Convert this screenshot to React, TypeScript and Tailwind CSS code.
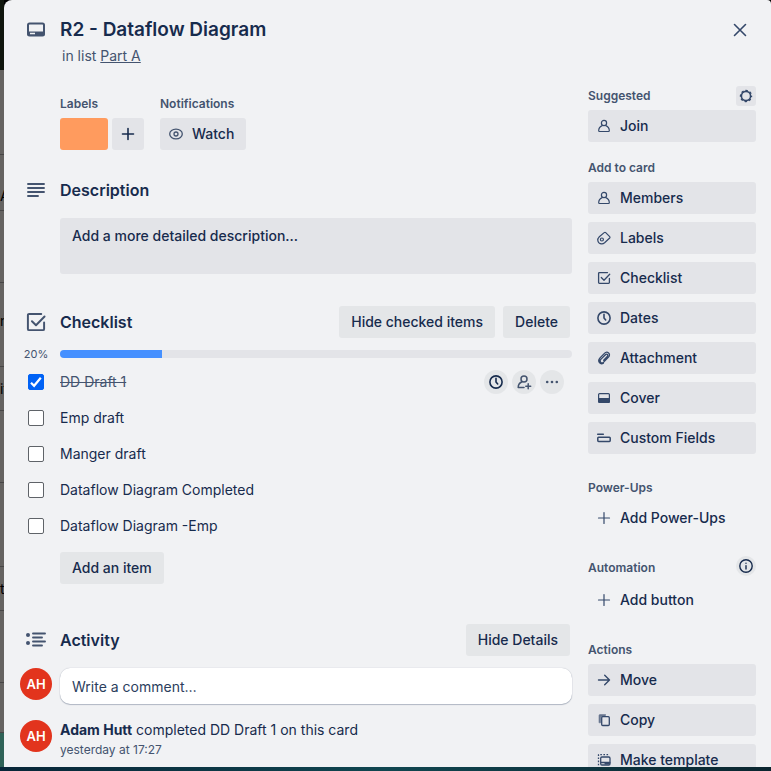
import React, { useState } from "react";

type IconProps = { className?: string; children: React.ReactNode; w?: number };

function Icon({ className = "size-4", children, w = 1.3 }: IconProps) {
  return (
    <svg
      viewBox="0 0 16 16"
      className={`shrink-0 ${className}`}
      fill="none"
      stroke="currentColor"
      strokeWidth={w}
      strokeLinecap="round"
      strokeLinejoin="round"
      aria-hidden="true"
    >
      {children}
    </svg>
  );
}

const Person = () => (
  <Icon w={1.2}>
    <circle cx="8" cy="5" r="2.6" />
    <path d="M6.2 7.6C4 8.6 2.7 10.4 2.7 12.7c0 .5.3.8.8.8h9c.5 0 .8-.3.8-.8 0-2.3-1.3-4.1-3.5-5.1" />
  </Icon>
);
const PersonAdd = () => (
  <Icon w={1.5}>
    <circle cx="8" cy="5" r="3" />
    <path d="M6 7.8C3.8 8.8 2.2 10.6 2.2 13.4H8M12.2 9.8v5M9.8 12.3h4.9" />
  </Icon>
);
const Tag = () => (
  <Icon w={1.2}>
    <path d="M8.2 2.6 3.3 6.700C.6 9.200 1.600 13.700 5.500 13.900c1.300.1 2.200-.3 3.100-1.100L13.700 8c.4-.4.4-.9 0-1.300L9.700 2.600c-.4-.4-1-.4-1.500 0Z" />
    <circle cx="5.900" cy="9.500" r="1.500" />
  </Icon>
);
const Check = ({ className, w }: { className?: string; w?: number }) => (
  <Icon className={className} w={w}>
    <path d="M11.500 2.600H3.400c-.5 0-.8.3-.8.8v9.200c0 .5.3.8.8.8h9.200c.5 0 .8-.3.8-.8V8.300" />
    <path d="m5.300 7.500 2.700 2.700 5.700-5.900" />
  </Icon>
);
const Clock = () => (
  <Icon w={1.6}>
    <circle cx="8" cy="8" r="6.100" />
    <path d="M8 4.300V8l1.700 2" />
  </Icon>
);
const Clip = () => (
  <Icon w={1.3}>
    <path d="m7.700 10.200 3.600-3.700c1.400-1.500-.5-3.200-1.900-1.800l-4.600 4.700c-2 2.200.8 4.900 2.900 2.700l4.800-5c2.900-3.200-1.300-6.700-4.100-3.700L4 7.900c-3.100 3.500.5 7.100 3.400 5.200" />
  </Icon>
);
const Cover = () => (
  <Icon w={1.2}>
    <rect x="2.600" y="3.600" width="10.800" height="8.800" rx="1" />
    <path d="M2.600 8.600h10.800v3c0 .5-.3.8-.8.8H3.400c-.5 0-.8-.3-.8-.8Z" fill="currentColor" />
  </Icon>
);
const Fields = () => (
  <Icon w={1.5}>
    <path d="M1.700 4.300h5.600" />
    <rect x="1.800" y="7.200" width="12.400" height="4.200" rx=".8" />
  </Icon>
);
const Plus = ({ w = 1.2 }: { w?: number }) => (
  <Icon w={w}>
    <path d="M8 2.500v11M2.500 8h11" />
  </Icon>
);
const Arrow = () => (
  <Icon w={1.4}>
    <path d="M2.500 8h11M8.700 3.300 13.500 8l-4.800 4.700" />
  </Icon>
);
const Copy = () => (
  <Icon>
    <path d="M9.500 2.600H4c-.6 0-1 .4-1 1v7.200h1.700V4.400h4.800Z" fill="currentColor" strokeWidth=".6" opacity=".7" />
    <rect x="5.700" y="4.700" width="7.600" height="8.800" rx="1" />
  </Icon>
);
const Template = () => (
  <Icon>
    <path d="M2.500 13.300V2.700h11" strokeDasharray="1.600 1.500" strokeLinecap="butt" />
    <rect x="4.700" y="5" width="9.300" height="8" rx="1.200" />
    <path d="M5 10.500h8.800M9 11.800h4.500" />
  </Icon>
);
const Gear = () => (
  <Icon w={1.6}>
    <circle cx="8" cy="8" r="4.600" />
    <circle cx="8" cy="8" r="5.500" strokeWidth="1.400" strokeLinecap="butt" strokeDasharray="2.400 1.920" strokeDashoffset="1.200" />
  </Icon>
);
const Info = () => (
  <Icon w={1.4}>
    <circle cx="8" cy="8" r="6.200" />
    <path d="M8 7.600v3.400M8 5.100v.1" />
  </Icon>
);
const Eye = () => (
  <Icon>
    <ellipse cx="8" cy="8" rx="6.300" ry="4.800" />
    <circle cx="8" cy="8" r="2" />
  </Icon>
);
const Dots = () => (
  <Icon w={0}>
    <g fill="currentColor">
      <circle cx="3.200" cy="8" r="1.300" />
      <circle cx="8" cy="8" r="1.300" />
      <circle cx="12.800" cy="8" r="1.300" />
    </g>
  </Icon>
);

const CardIcon = () => (
  <svg viewBox="0 0 24 24" className="size-6" fill="none" stroke="currentColor" strokeWidth="2" aria-hidden="true">
    <rect x="4" y="5.500" width="16" height="12" rx="1.500" />
    <path d="M4 14h16v2.500c0 .6-.4 1-1 1H5c-.6 0-1-.4-1-1Z" fill="currentColor" strokeWidth="1" />
    <path d="M6 15.500h5" stroke="#f1f2f4" strokeWidth="1.600" />
  </svg>
);
const Lines = () => (
  <svg viewBox="0 0 24 24" className="size-6" stroke="currentColor" strokeWidth="1.900" strokeLinecap="round" aria-hidden="true">
    <path d="M4 6h16M4 10h16M4 14h16M4 18h10" />
  </svg>
);
const ActivityIcon = () => (
  <svg viewBox="0 0 24 24" className="size-6" stroke="currentColor" strokeWidth="1.900" strokeLinecap="round" aria-hidden="true">
    <path d="M9 5.500h12M9 9.500h9M9 13.500h12M9 17.500h9" />
    <circle cx="4" cy="7" r="2" fill="currentColor" stroke="none" />
    <circle cx="4" cy="15" r="2" fill="currentColor" stroke="none" />
  </svg>
);

function SideButton({ icon, children, plain = false }: { icon: React.ReactNode; children: React.ReactNode; plain?: boolean }) {
  return (
    <button
      type="button"
      className={`flex h-8 w-full items-center gap-2 rounded-[3px] px-2 text-left font-medium ${plain ? "" : "bg-[#e3e4e8]"}`}
    >
      <span className="text-[#34486a]">{icon}</span>
      {children}
    </button>
  );
}

function GreyButton({ children }: { children: React.ReactNode }) {
  return (
    <button type="button" className="h-8 rounded-[3px] bg-[#e4e6e8] px-3 font-medium">
      {children}
    </button>
  );
}

function Row({ icon, children, className = "" }: { icon?: React.ReactNode; children: React.ReactNode; className?: string }) {
  return (
    <div className={`grid grid-cols-[56px_1fr] items-center ${className}`}>
      <div className="flex justify-center pl-2 text-[#44546f]">{icon}</div>
      {children}
    </div>
  );
}

const Avatar = () => (
  <span className="flex size-8 items-center justify-center rounded-full bg-[#e2341d] text-[13px] font-semibold text-white">AH</span>
);

const sideHeading = "text-xs font-semibold text-[#44546f]";

const boardCards: { size: string; text?: string }[] = [
  { size: "h-[85px] items-center" },
  { size: "h-[56px] items-end pb-1", text: "A" },
  { size: "h-[72px] items-center" },
  { size: "h-[84px] items-center pb-2", text: "m" },
  { size: "h-[44px] items-center", text: "it" },
  { size: "h-[72px] items-center" },
  { size: "h-[84px] items-center" },
  { size: "h-[44px] items-center", text: "ts" },
  { size: "h-[72px] items-center" },
  { size: "h-[50px] items-center" },
];

const initialItems = [
  { name: "DD Draft 1", done: true },
  { name: "Emp draft", done: false },
  { name: "Manger draft", done: false },
  { name: "Dataflow Diagram Completed", done: false },
  { name: "Dataflow Diagram -Emp", done: false },
];

export default function App() {
  const [items, setItems] = useState(initialItems);
  const percent = Math.round((items.filter((i) => i.done).length / items.length) * 100);
  const toggle = (n: number) => setItems(items.map((it, i) => (i === n ? { ...it, done: !it.done } : it)));

  return (
    <div className="flex h-screen overflow-hidden bg-linear-to-r from-[#082638] via-[#104650] to-[#0b2630] pb-1 font-['Inter','Liberation_Sans',sans-serif] text-sm leading-5 text-[#172b4d]">
      <div className="flex w-1 shrink-0 flex-col overflow-hidden bg-[#2f6257]" aria-hidden="true">
        <div className="h-[70px] shrink-0 bg-[#10160d]" />
        {boardCards.map((c, i) => (
          <div key={i} className={`flex shrink-0 border-b border-[#474646] bg-[#656361] text-black ${c.size}`}>
            {c.text}
          </div>
        ))}
      </div>

      <div className="min-w-0 flex-1 bg-black">
        <main className="h-full overflow-hidden rounded-tl-lg rounded-tr-[4px] bg-[#f1f2f4] pr-[15px]">
          <header className="flex items-start pt-4">
            <div className="min-w-0 flex-1">
              <Row icon={<CardIcon />}>
                <h1 className="text-[19px] leading-7 font-semibold">R2 - Dataflow Diagram</h1>
              </Row>
              <p className="mt-0.5 pl-[58px] text-[#44546f]">
                in list{" "}
                <a href="#part-a" className="underline">
                  Part A
                </a>
              </p>
            </div>
            <button type="button" aria-label="Close" className="mt-0.5 mr-1 flex size-6 items-center justify-center text-[#34486a]">
              <Icon w={1.6}>
                <path d="m2.500 2.500 11 11M13.500 2.500l-11 11" />
              </Icon>
            </button>
          </header>

          <div className="flex gap-4 pt-5">
            <div className="min-w-0 flex-1 pt-2">
              <div className="flex gap-4 pl-14">
                <section>
                  <h2 className={`mb-1 leading-5 ${sideHeading}`}>Labels</h2>
                  <div className="flex gap-1">
                    <button type="button" aria-label="Orange label" className="h-8 w-12 rounded-[3px] bg-[#ff9b5e]" />
                    <button type="button" aria-label="Add label" className="flex size-8 items-center justify-center rounded-[3px] bg-[#e3e4e8]">
                      <Plus w={1.6} />
                    </button>
                  </div>
                </section>
                <section>
                  <h2 className={`mb-1 leading-5 ${sideHeading}`}>Notifications</h2>
                  <button type="button" className="flex h-8 items-center gap-2 rounded-[3px] bg-[#e3e4e8] pr-3 pl-2 font-medium">
                    <span className="text-[#44546f]">
                      <Eye />
                    </span>
                    Watch
                  </button>
                </section>
              </div>

              <section className="pt-7">
                <Row icon={<Lines />}>
                  <h2 className="text-base font-semibold">Description</h2>
                </Row>
                <div className="pt-4 pl-14">
                  <button type="button" className="flex h-14 w-full rounded-[3px] bg-[#e3e4e8] px-3 py-2 text-left font-medium">
                    Add a more detailed description...
                  </button>
                </div>
              </section>

              <section className="pt-8">
                <Row icon={<Check className="size-6" w={1.3} />}>
                  <div className="flex items-center gap-2 pr-0.5">
                    <h2 className="flex-1 text-base font-semibold">Checklist</h2>
                    <GreyButton>Hide checked items</GreyButton>
                    <GreyButton>Delete</GreyButton>
                  </div>
                </Row>
                <Row className="pt-2" icon={<span className="text-[11px] leading-4">{percent}%</span>}>
                  <div className="h-2 overflow-hidden rounded-full bg-[#e3e4e8]">
                    <div className="h-full bg-[#4590ff]" style={{ width: `${percent}%` }} />
                  </div>
                </Row>
                <ul className="pt-0.5">
                  {items.map((item, n) => (
                    <li key={item.name}>
                      <Row
                        className="h-9"
                        icon={
                          <span className="relative flex">
                            <input
                              id={`item-${n}`}
                              type="checkbox"
                              checked={item.done}
                              onChange={() => toggle(n)}
                              className="size-4 appearance-none rounded-[2px] border border-[#5f6368] bg-white checked:border-[#0062f5] checked:bg-[#0062f5]"
                            />
                            {item.done && (
                              <svg viewBox="0 0 16 16" className="pointer-events-none absolute inset-0 size-4" fill="none" stroke="white" strokeWidth="2.200" aria-hidden="true">
                                <path d="m3 8.700 3.100 3.100L12.800 3.800" />
                              </svg>
                            )}
                          </span>
                        }
                      >
                        <div className="flex items-center pr-2">
                          <label htmlFor={`item-${n}`} className={`flex-1 ${item.done ? "text-[#44546f] line-through" : ""}`}>
                            {item.name}
                          </label>
                          {item.done && (
                            <div className="flex gap-1">
                              <button type="button" aria-label="Due date" className="flex size-6 items-center justify-center rounded-full bg-[#e4e6e8]">
                                <Clock />
                              </button>
                              <button type="button" aria-label="Assign" className="flex size-6 items-center justify-center rounded-full bg-[#e4e6e8] text-[#44546f]">
                                <PersonAdd />
                              </button>
                              <button type="button" aria-label="More" className="flex size-6 items-center justify-center rounded-full bg-[#e4e6e8] text-[#44546f]">
                                <Dots />
                              </button>
                            </div>
                          )}
                        </div>
                      </Row>
                    </li>
                  ))}
                </ul>
                <div className="pt-2 pl-14">
                  <GreyButton>Add an item</GreyButton>
                </div>
              </section>

              <section className="pt-10">
                <Row icon={<ActivityIcon />}>
                  <div className="flex items-center pr-0.5">
                    <h2 className="flex-1 text-base font-semibold">Activity</h2>
                    <GreyButton>Hide Details</GreyButton>
                  </div>
                </Row>
                <div className="flex items-start gap-2 pt-3 pl-4">
                  <Avatar />
                  <input
                    aria-label="Write a comment"
                    placeholder="Write a comment…"
                    className="h-9 min-w-0 flex-1 rounded-[10px] bg-white px-3 shadow-[0_1px_1px_#091e4240,0_0_1px_#091e424f] placeholder:text-[#2c3e5d]"
                  />
                </div>
                <div className="flex items-start gap-2 pt-4 pl-4">
                  <Avatar />
                  <div>
                    <p>
                      <strong className="font-bold">Adam Hutt</strong> completed DD Draft 1 on this card
                    </p>
                    <p className="text-xs leading-5 text-[#44546f]">yesterday at 17:27</p>
                  </div>
                </div>
              </section>
            </div>

            <aside className="w-42 shrink-0">
              <section>
                <div className="mb-1 flex h-5 items-center justify-between">
                  <h2 className={sideHeading}>Suggested</h2>
                  <button type="button" aria-label="Settings" className="flex size-5 items-center justify-center rounded-[3px] bg-[#e3e4e8] text-[#34486a]">
                    <Gear />
                  </button>
                </div>
                <SideButton icon={<Person />}>Join</SideButton>
              </section>

              <section className="mt-4">
                <h2 className={`mb-1 leading-5 ${sideHeading}`}>Add to card</h2>
                <div className="flex flex-col gap-2">
                  <SideButton icon={<Person />}>Members</SideButton>
                  <SideButton icon={<Tag />}>Labels</SideButton>
                  <SideButton icon={<Check />}>Checklist</SideButton>
                  <SideButton icon={<Clock />}>Dates</SideButton>
                  <SideButton icon={<Clip />}>Attachment</SideButton>
                  <SideButton icon={<Cover />}>Cover</SideButton>
                  <SideButton icon={<Fields />}>Custom Fields</SideButton>
                </div>
              </section>

              <section className="mt-6">
                <h2 className={`mb-1 leading-5 ${sideHeading}`}>Power-Ups</h2>
                <SideButton plain icon={<Plus />}>Add Power-Ups</SideButton>
              </section>

              <section className="mt-[22px]">
                <div className="mb-1 flex h-6 items-start justify-between">
                  <h2 className={`self-center ${sideHeading}`}>Automation</h2>
                  <button type="button" aria-label="About automation" className="flex size-5 items-center justify-center rounded-full bg-[#e4e6e8]">
                    <Info />
                  </button>
                </div>
                <SideButton plain icon={<Plus />}>Add button</SideButton>
              </section>

              <section className="mt-6">
                <h2 className={`mb-1 leading-5 ${sideHeading}`}>Actions</h2>
                <div className="flex flex-col gap-2">
                  <SideButton icon={<Arrow />}>Move</SideButton>
                  <SideButton icon={<Copy />}>Copy</SideButton>
                  <SideButton icon={<Template />}>Make template</SideButton>
                </div>
              </section>
            </aside>
          </div>
        </main>
      </div>
    </div>
  );
}
